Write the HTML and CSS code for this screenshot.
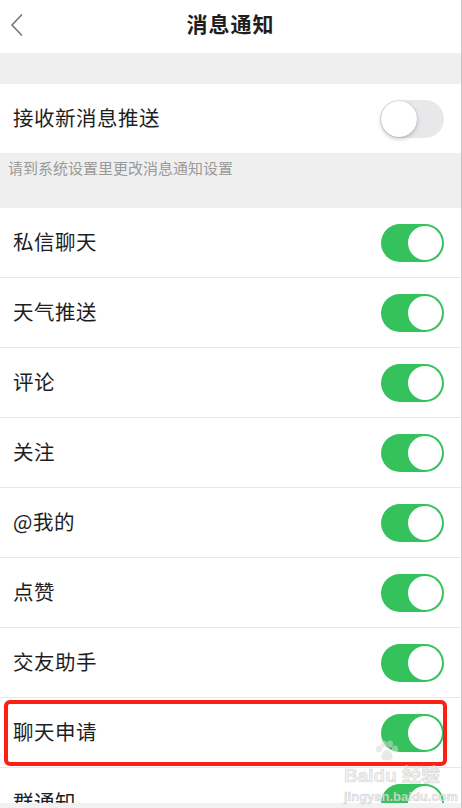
FILE: index.html
```html
<!DOCTYPE html>
<html lang="zh-CN">
  <head>
    <meta charset="utf-8" />
    <title>消息通知</title>
    <link rel="stylesheet" href="styles.css">
  </head>
  <body>
    <div class="page">
      <header class="nav">
        <svg class="back" width="14" height="24" viewBox="0 0 14 24">
          <path d="M12 1.5 L2 12 L12 22.5" fill="none" stroke="#777" stroke-width="1.6" />
        </svg>
        <h1 class="title">消息通知</h1>
      </header>

      <div class="gap"></div>

      <div class="row first">
        <span class="label">接收新消息推送</span>
        <span class="switch off"><span class="knob"></span></span>
      </div>
      <div class="hint">请到系统设置里更改消息通知设置</div>

      <ul class="list">
        <li class="row"><span class="label">私信聊天</span><span class="switch"><span class="knob"></span></span></li>
        <li class="row"><span class="label">天气推送</span><span class="switch"><span class="knob"></span></span></li>
        <li class="row"><span class="label">评论</span><span class="switch"><span class="knob"></span></span></li>
        <li class="row"><span class="label">关注</span><span class="switch"><span class="knob"></span></span></li>
        <li class="row"><span class="label">@我的</span><span class="switch"><span class="knob"></span></span></li>
        <li class="row"><span class="label">点赞</span><span class="switch"><span class="knob"></span></span></li>
        <li class="row"><span class="label">交友助手</span><span class="switch"><span class="knob"></span></span></li>
        <li class="row marked"><span class="label">聊天申请</span><span class="switch"><span class="knob"></span></span></li>
        <li class="row"><span class="label">群通知</span><span class="switch"><span class="knob"></span></span></li>
      </ul>

      <div class="bottom"></div>

      <div class="watermark">
        <svg class="paw" width="26" height="22" viewBox="0 0 26 22">
          <ellipse cx="5" cy="9" rx="3" ry="3.6" />
          <ellipse cx="10" cy="4" rx="3" ry="3.6" />
          <ellipse cx="16" cy="4" rx="3" ry="3.6" />
          <ellipse cx="21" cy="9" rx="3" ry="3.6" />
          <path d="M13 10 C9 10 6 16 8 19 C10 21 16 21 18 19 C20 16 17 10 13 10 Z" />
        </svg>
        <span class="wm-big">Bai<b>du</b> 经验</span>
        <span class="wm-small">jingyan.baidu.com</span>
      </div>
    </div>
  </body>
</html>
```

FILE: styles.css
```css
* {
  box-sizing: border-box;
}
body {
  margin: 0;
  background: #fff;
  font-family: "Noto Sans CJK SC", "Noto Sans", sans-serif;
  color: #1e1e1e;
}
.page {
  position: relative;
  width: 462px;
  height: 808px;
  overflow: hidden;
  border-right: 1px solid #c9c9c9;
  display: flex;
  flex-direction: column;
}
.nav {
  height: 53px;
  flex: none;
  display: flex;
  align-items: center;
  justify-content: center;
  position: relative;
  background: #fff;
}
.back {
  position: absolute;
  left: 10px;
  top: 13px;
}
.title {
  margin: 0 0 7px 0;
  font-size: 21px;
  font-weight: 700;
  letter-spacing: 1px;
}
.gap {
  height: 31px;
  flex: none;
  background: #efefef;
}
.row {
  display: flex;
  align-items: center;
  justify-content: space-between;
  height: 70px;
  flex: none;
  padding: 0 17px 0 13px;
  border-bottom: 1px solid #e8e8e8;
}
.row.first {
  height: 69px;
  border-bottom: none;
}
.label {
  font-size: 20.5px;
  letter-spacing: 0.5px;
  margin-bottom: 3px;
}
.hint {
  height: 55px;
  flex: none;
  background: #efefef;
  padding: 4px 8px 0;
  font-size: 15px;
  color: #9a9a9a;
}
.list {
  list-style: none;
  margin: 0;
  padding: 0;
  flex: none;
}
.row.marked {
  position: relative;
}
.row.marked::after {
  content: "";
  position: absolute;
  left: 4px;
  right: 14px;
  top: 2px;
  bottom: 1px;
  border: 4px solid #fb1f14;
  border-radius: 6px;
}
.switch {
  width: 63px;
  height: 38px;
  border-radius: 19px;
  background: #35c25c;
  position: relative;
  flex: none;
}
.knob {
  position: absolute;
  top: 2px;
  right: 2px;
  width: 34px;
  height: 34px;
  border-radius: 50%;
  background: #fff;
}
.switch.off {
  background: #e8e8ea;
  width: 64px;
}
.switch.off .knob {
  right: auto;
  left: 1px;
  top: 1px;
  width: 36px;
  height: 36px;
  box-shadow: 0 2px 4px rgba(0, 0, 0, 0.22), 0 0 1px rgba(0, 0, 0, 0.2);
}
.bottom {
  position: absolute;
  left: 0;
  right: 0;
  bottom: 0;
  height: 5px;
  background: #f1f1f1;
}
.watermark {
  position: absolute;
  left: 344px;
  top: 740px;
  display: flex;
  flex-direction: column;
  font-family: "Liberation Sans", "Noto Sans CJK SC", sans-serif;
  color: rgba(235, 235, 235, 0.75);
  -webkit-text-stroke: 0.6px rgba(170, 170, 170, 0.45);
  line-height: 1;
}
.paw {
  margin-left: 30px;
  margin-bottom: 4px;
  fill: rgba(215, 215, 215, 0.55);
}
.wm-big {
  font-size: 19px;
  font-weight: 700;
}
.wm-big b {
  font-weight: 700;
}
.wm-small {
  margin-top: 5px;
  font-size: 13px;
  font-weight: 700;
}
```
